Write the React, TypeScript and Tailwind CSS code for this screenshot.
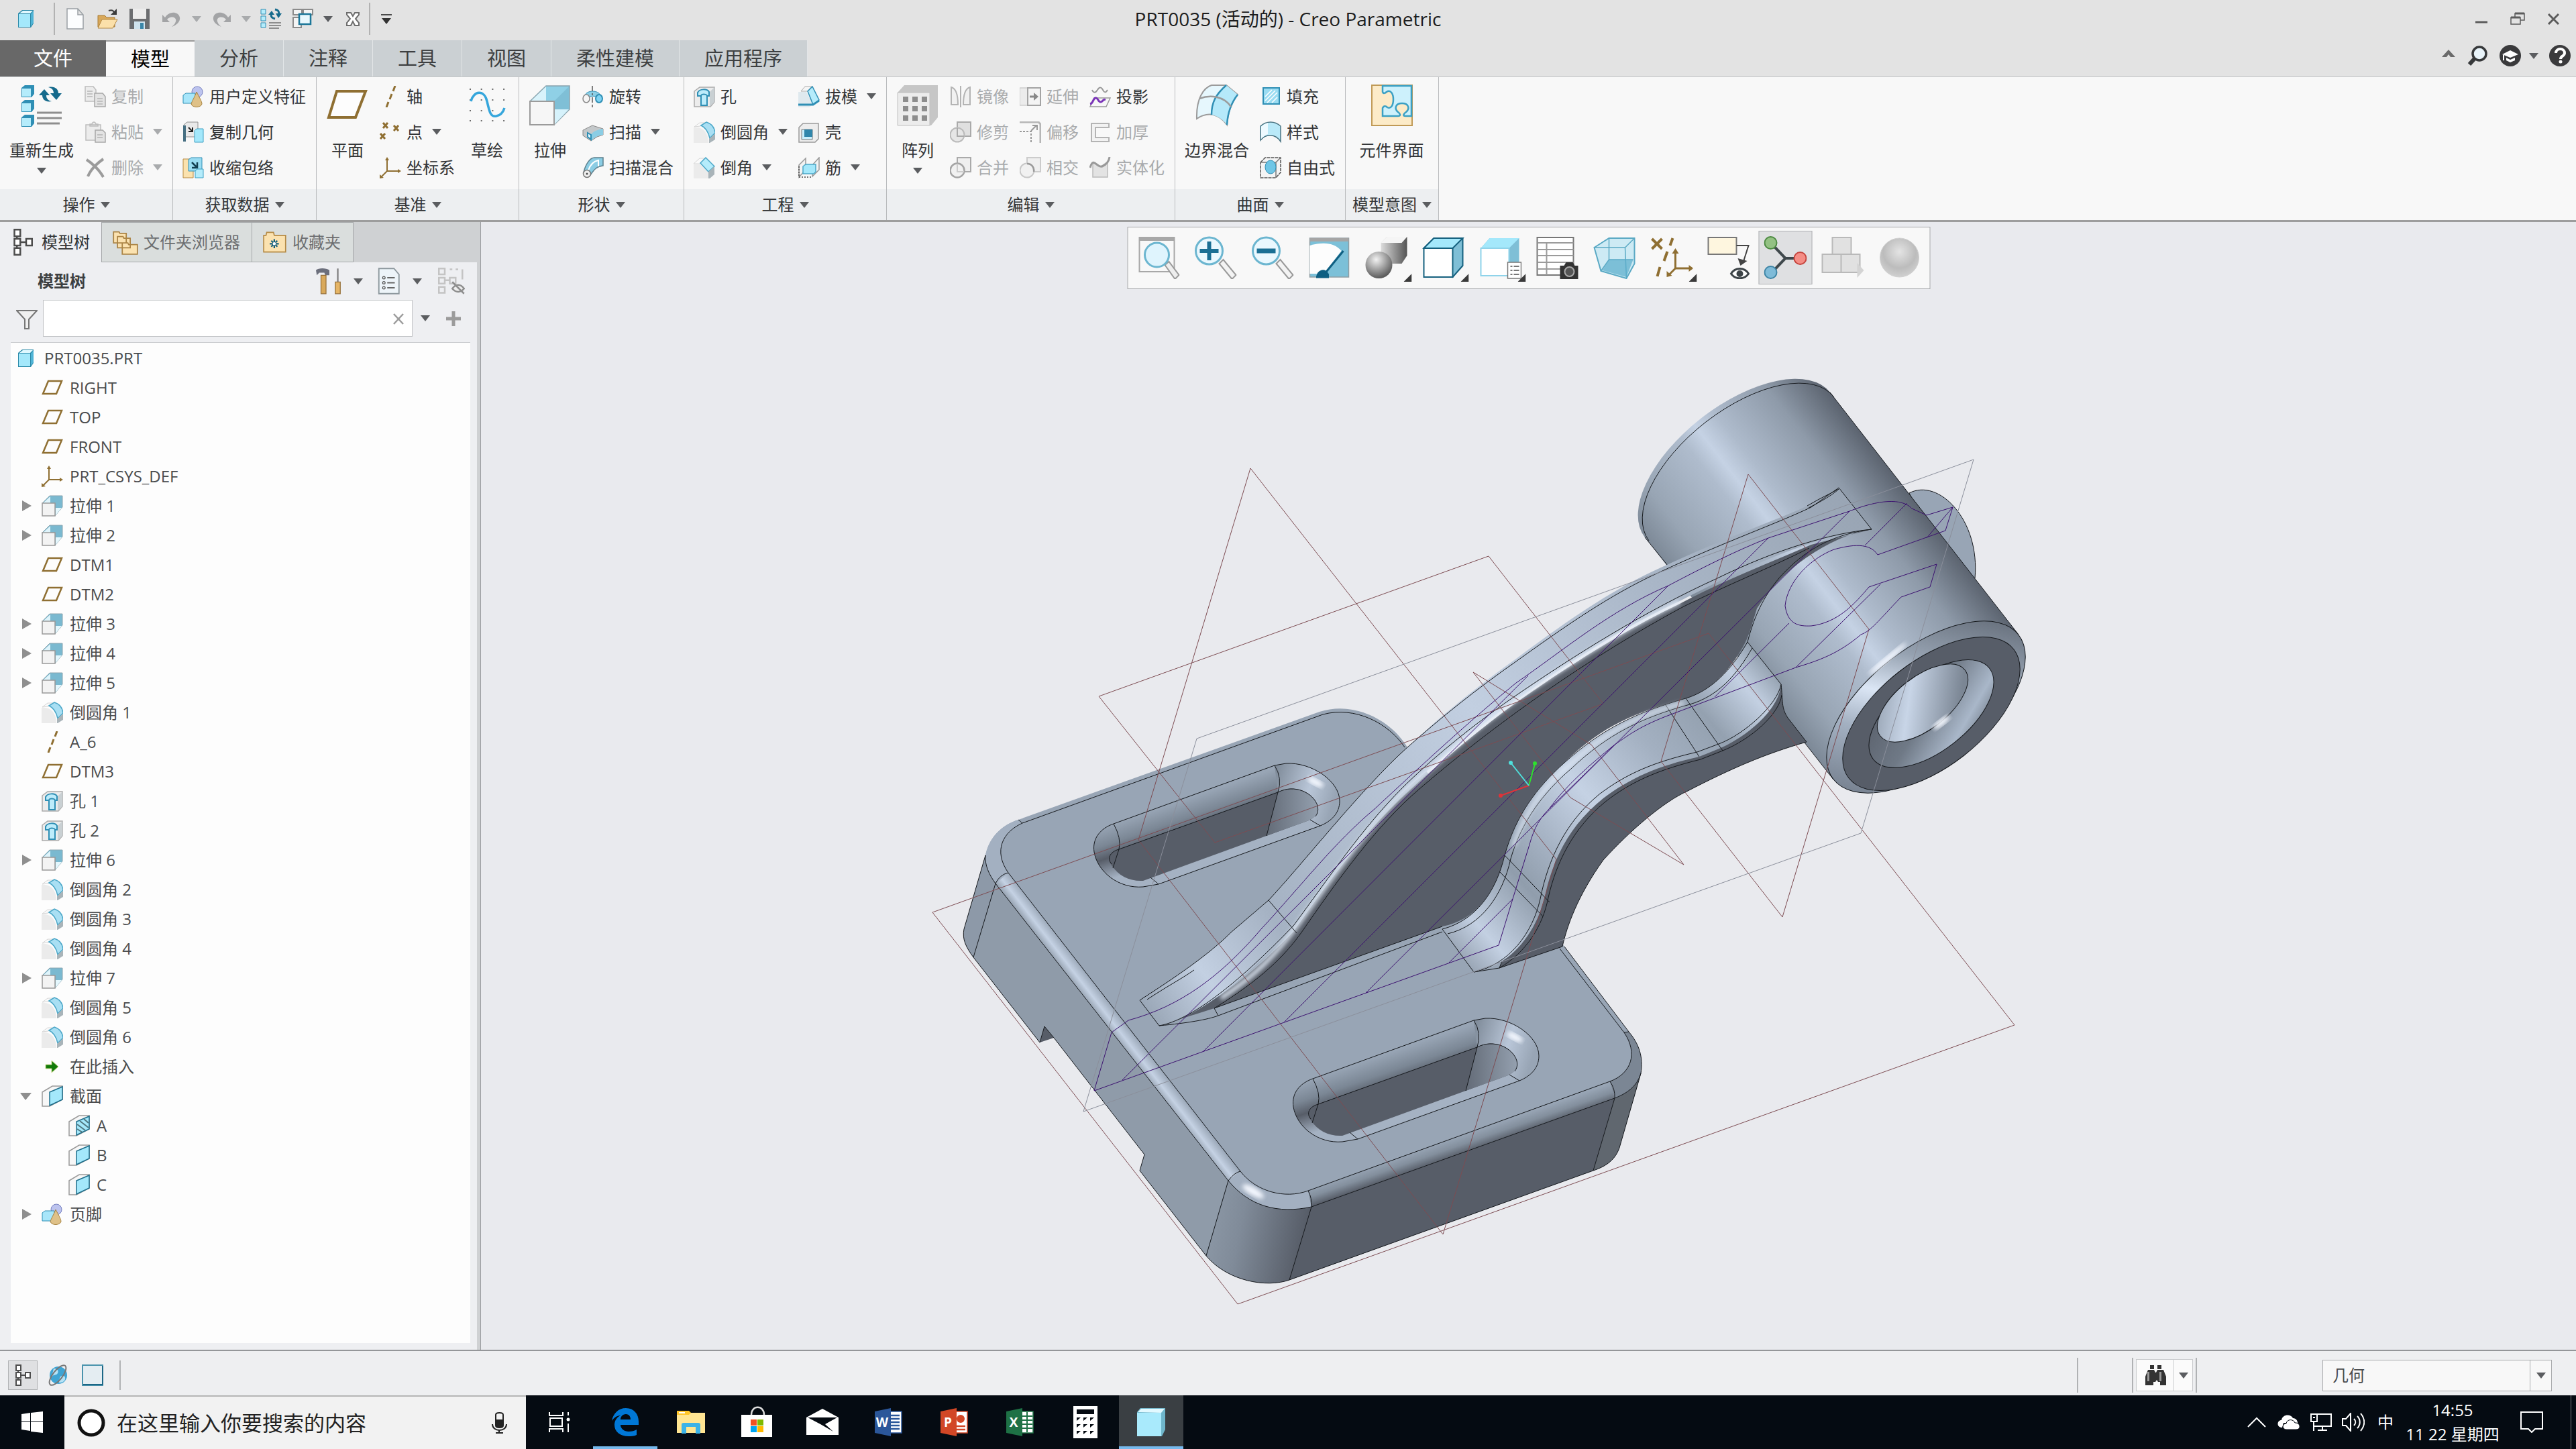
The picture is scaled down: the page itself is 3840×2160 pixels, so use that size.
import type { ReactNode } from "react";

const GRAY = "#8f8f8f";
const BLUE = "#2f8fb5";
const GOLD = "#8f6f32";

// ---------- 32px icons ----------

const ICONS: Record<string, ReactNode> = {
  cube: (
    <>
      <path d="M3 8l6-5h17v20l-4 6H3z" fill="#2b89a8" />
      <path d="M4 9h17v19H4z" fill="#a4e8fb" />
      <path d="M5 8l5-4h15l-4 4z" fill="#dff8ff" />
      <path d="M22 9l4-5v18l-4 5z" fill="#4fb4d6" />
    </>
  ),
  fileNew: <path d="M4 1h16l8 9v21H4zM20 1v9h8" fill="#fcfdfe" stroke="#9aa0a5" strokeWidth="1.5" />,
  open: (
    <>
      <path d="M2 11h10l3 3h12v14H2z" fill="#d8a85a" stroke="#a77a34" />
      <path d="M8 17h23l-7 13H2z" fill="#fbe0aa" stroke="#b58a45" />
      <path d="M18 4c5-2 7 0 8 2" stroke="#3b3b3b" strokeWidth="2" />
      <path d="M30 1v9h-9z" fill="#3b3b3b" />
    </>
  ),
  save: (
    <>
      <path d="M1 1h30v30H1z" fill="#6b6d70" />
      <path d="M6 1h20v15H6z" fill="#ececec" />
      <path d="M8 20h16v11H8z" fill="#cfe3ee" />
      <path d="M17 22h5v9h-5z" fill="#3a86a8" />
    </>
  ),
  undo: <path d="M2 10v11h11l-4-4c5-6 15-4 13 3-1 4-4 6-6 8 8-3 13-8 12-14C26 5 12 4 6 14z" fill="#a3a4a6" />,
  redo: <path d="M30 10v11H19l4-4c-5-6-15-4-13 3 1 4 4 6 6 8-8-3-13-8-12-14C6 5 20 4 26 14z" fill="#a3a4a6" />,
  regen: (
    <>
      <path d="M1 2h7v7H1zM1 12h7v7H1zM1 22h7v7H1z" fill="#b5ecfb" stroke={BLUE} />
      <path d="M13 22h18M13 26h18M13 30h15" stroke="#8e8e8e" strokeWidth="2" />
      <path d="M12 10h9l-4-6zM23 8h9l-5 7z" fill="#156a8c" />
      <path d="M16 9c0 5 2 6 6 7M28 9c0-5-2-6-6-7" stroke="#156a8c" strokeWidth="3" />
    </>
  ),
  windows: (
    <>
      <path d="M1 2h13v8H1zM16 2h14v8H16zM1 14h12v15H1z" fill="#f4f4f4" stroke="#8b8b8b" strokeWidth="2" />
      <path d="M10 9h17v15H10z" fill="#e9f8fd" stroke="#1d7799" strokeWidth="2.5" />
    </>
  ),
  closeWin: (
    <path d="M7 7h6l3 5 3-5h6v3l-5 6 5 6v4h-6l-3-6-3 6H7v-4l5-6-5-6z" fill="#fff" stroke="#6e6e6e" strokeWidth="2" />
  ),
  copy: (
    <>
      <path d="M1 1h12l4 5v17H1z" fill="#ececec" stroke="#bdbdbd" strokeWidth="1.5" />
      <path d="M15 11h12l4 5v15H15z" fill="#e3e3e3" stroke="#a8a8a8" strokeWidth="1.5" />
      <path d="M4 8h8M4 12h8M4 16h8M19 19h8M19 23h8M19 27h8" stroke="#b5b5b5" strokeWidth="1.5" />
    </>
  ),
  paste: (
    <>
      <path d="M2 5h22v23H2zM8 7V4h3c1-4 5-4 6 0h3v3z" fill="#ececec" stroke="#bdbdbd" strokeWidth="1.5" />
      <path d="M16 13h11l4 4v14H16z" fill="#e3e3e3" stroke="#a8a8a8" strokeWidth="1.5" />
      <path d="M19 20h8M19 24h8" stroke="#b5b5b5" strokeWidth="1.5" />
    </>
  ),
  remove: <path d="M3 4c8 5 19 15 25 26M28 3C18 10 9 19 5 29" stroke="#9b9b9b" strokeWidth="4" fill="none" />,
  udf: (
    <>
      <circle cx="22" cy="9" r="8" fill="#bcc3ee" stroke="#7680c0" />
      <path d="M1 14l4-3h14v12l-3 3H1z" fill="#a8e6fa" stroke={BLUE} />
      <path d="M21 9c4 8 8 14 8 18-2 6-14 6-16 0 1-4 5-10 8-18z" fill="#dfc188" stroke="#a5803c" />
    </>
  ),
  copyGeom: (
    <>
      <path d="M2 5l5-4h16v22H2z" fill="#e9e9e9" stroke="#8e8e8e" />
      <path d="M1 6h4v24H1z" fill="#466f82" />
      <path d="M9 9l6 6m0-6v6H9" stroke="#222" strokeWidth="2" fill="none" />
      <path d="M18 14l3-3h10v20H18z" fill="#a4e8fb" stroke="#3aa0c4" />
    </>
  ),
  shrink: (
    <>
      <path d="M1 3h15v28H1z" fill="#fbe2ae" stroke="#b58a45" />
      <path d="M9 4l4-3h16v20H9z" fill="#9adcf2" stroke={BLUE} />
      <path d="M14 8l8 8m0-8v8h-8" stroke="#123f52" strokeWidth="2.5" fill="none" />
      <path d="M19 21l3-3h9v13H19z" fill="#b5ecfb" stroke="#3aa0c4" />
    </>
  ),
  axis: <path d="M23 0l-3 8M18 12l-3 8M13 24l-3 8" stroke={GOLD} strokeWidth="3" />,
  points: (
    <path d="M5 2l7 8m0-8L5 10M21 6l7 8m0-8l-7 8M1 18l7 8m0-8l-7 8" stroke={GOLD} strokeWidth="3" />
  ),
  csys: (
    <>
      <path d="M11 3v18h18M11 21L2 30" stroke={GOLD} strokeWidth="2" fill="none" />
      <path d="M8 5l3-5 3 5zM27 18l5 3-5 3zM0 32v-6l6 5z" fill={GOLD} />
    </>
  ),
  revolve: (
    <>
      <path d="M4 14C7 6 24 6 27 14l-5 5c-2-5-10-5-13 0z" fill="#8ccfe6" stroke={BLUE} />
      <ellipse cx="6" cy="19" rx="5" ry="6" fill="#f5f5f5" stroke="#888" strokeWidth="1.5" />
      <ellipse cx="25" cy="19" rx="5" ry="6" fill="#7fd3f2" stroke={BLUE} strokeWidth="2" />
      <path d="M15 0v8m0 3v3m0 3v8m0 3v4" stroke="#555" strokeWidth="1.5" />
    </>
  ),
  sweep: (
    <>
      <path d="M1 13L15 6l16 5v9l-9 3-9 6-12-8z" fill="#c4c8ca" stroke="#888" />
      <path d="M13 19c6-6 12-7 18-8v9c-8 1-12 3-18 9z" fill="#8bcde4" />
      <path d="M8 17l5 3v7l-5-4z" fill="#e6f7fd" stroke={BLUE} strokeWidth="2" />
    </>
  ),
  blend: (
    <>
      <path d="M2 23C5 10 12 1 18 1h13v12C22 14 18 18 12 27z" fill="#8bcde4" stroke="#5c7f8c" strokeWidth="1.5" />
      <path d="M9 20C12 11 18 6 24 5v9" stroke="#fff" strokeWidth="2" fill="none" />
      <circle cx="7" cy="25" r="5.5" fill="#f0f0f0" stroke="#777" strokeWidth="1.5" />
      <circle cx="7" cy="25" r="1.5" fill="#444" />
    </>
  ),
  hole: (
    <>
      <path d="M1 8l8-6h22v22l-6 7H1z" fill="#ececec" stroke="#aaa" strokeWidth="1.5" />
      <path d="M24 9l7-7v22l-7 7z" fill="#c9d0d3" />
      <path d="M6 10c3-6 14-6 17-1v6h-3v14h-9V15H6z" fill="#bdecfb" stroke={BLUE} strokeWidth="2" />
      <path d="M11 14c2-2 6-2 9 0" stroke={BLUE} strokeWidth="2" fill="none" />
    </>
  ),
  round: (
    <>
      <path d="M0 9h4C14 9 22 17 22 32H0z" fill="#ebebeb" />
      <path d="M1 8l8-6h8l-7 5z" fill="#fafafa" stroke="#ccc" strokeWidth=".8" />
      <path d="M11 6l8-5c7 2 12 8 13 16l-8 8C22 16 18 9 11 6z" fill="#a9dff3" stroke="#4ba7c8" strokeWidth="1.5" />
      <path d="M23 26l9-8v9l-8 5h-1z" fill="#a9b4b9" />
    </>
  ),
  chamfer: (
    <>
      <path d="M0 11h10l12 12v9H0z" fill="#ebebeb" />
      <path d="M0 10l9-8h7l-6 8z" fill="#fafafa" stroke="#ccc" strokeWidth=".8" />
      <path d="M10 9l8-8 13 13-9 8z" fill="#b5ecfb" stroke="#4ba7c8" strokeWidth="1.5" />
      <path d="M22 22l9-8v12l-7 6h-2z" fill="#a9b4b9" />
    </>
  ),
  draft: (
    <>
      <path d="M0 9h12l10 19-6 4H0z" fill="#dfe9ee" />
      <path d="M4 8l6-7h10l-6 7z" fill="#f5f5f5" stroke="#aaa" />
      <path d="M14 8l7-7 10 20-9 7z" fill="#b5ecfb" stroke={BLUE} strokeWidth="1.5" />
      <path d="M0 28h22l9-6" stroke={BLUE} strokeWidth="3" fill="none" />
    </>
  ),
  shell: (
    <>
      <path d="M1 9l6-6h23v23l-5 5H1z" fill="#ededed" stroke="#9a9a9a" strokeWidth="1.5" />
      <path d="M5 12h16v15H5z" fill="#c9eefb" stroke="#777" />
      <path d="M9 12h12v11H9z" fill="#2f86ab" />
    </>
  ),
  rib: (
    <>
      <path d="M1 12L11 2v17L1 30zM31 1L21 12v17l10-10z" fill="#f3f3f3" stroke="#999" strokeWidth="1.5" />
      <path d="M7 14l4-3h15v11l-3 3H7z" fill="#a4e8fb" stroke="#4ba7c8" strokeWidth="1.5" />
      <path d="M1 14v16h20" stroke="#444" strokeWidth="1.5" strokeDasharray="2 2" fill="none" />
    </>
  ),
  mirror: (
    <>
      <path d="M2 2c8 2 10 12 10 26H2zM30 2c-8 2-10 12-10 26h10z" fill="#f1f1f1" stroke="#b4b4b4" strokeWidth="2" />
      <path d="M16 0v32" stroke="#b4b4b4" strokeWidth="2" />
    </>
  ),
  trim: (
    <>
      <path d="M11 1h20v21H11z" fill="#e0e0e0" stroke="#aaa" strokeWidth="2" />
      <circle cx="11" cy="20" r="10.500" fill="#e6e6e6" stroke="#bbb" strokeWidth="2" />
      <path d="M11 10v12h10" stroke="#aaa" strokeWidth="2" />
    </>
  ),
  merge: (
    <>
      <path d="M11 1h20v21H11z" fill="#efefef" stroke="#aaa" strokeWidth="2" />
      <circle cx="11" cy="20" r="10.500" fill="#f1f1f1" stroke="#a4a4a4" strokeWidth="2.5" />
      <path d="M11 10v12h10" stroke="#ccc" strokeWidth="2" />
    </>
  ),
  extend: (
    <>
      <path d="M0 3h31v26H0z" fill="#ececec" stroke="#bbb" />
      <path d="M12 3h19v26H12z" fill="#f4f4f4" stroke="#a4a4a4" strokeWidth="2" />
      <path d="M15 16h8" stroke="#888" strokeWidth="3" />
      <path d="M21 10l7 6-7 6z" fill="#888" />
    </>
  ),
  offset: (
    <>
      <path d="M0 1h28l3 3v28" fill="none" stroke="#b6b6b6" strokeWidth="3" />
      <path d="M0 15h17v17" fill="none" stroke="#999" strokeWidth="2" strokeDasharray="3 2" />
      <path d="M17 14l8-8m-6 0h7v7" fill="none" stroke="#999" strokeWidth="2" />
    </>
  ),
  intersect: (
    <>
      <path d="M11 1h20v21H11z" fill="#efefef" stroke="#ccc" strokeWidth="2" />
      <circle cx="11" cy="20" r="10.500" fill="#f1f1f1" stroke="#c8c8c8" strokeWidth="2" />
      <path d="M11 10c7 0 11 6 10 12" stroke="#999" strokeWidth="2.500" fill="none" />
    </>
  ),
  project: (
    <>
      <path d="M7 18h24l-6 13H1z" fill="#f7f7f7" stroke="#999" strokeWidth="1.5" />
      <path d="M4 6c2 5 5 5 8 0s6-4 8 0 4 5 7 0" fill="none" stroke="#999" strokeWidth="2" />
      <path d="M1 27c5-1 4-8 8-9s4 7 8 6 3-5 7-3" fill="none" stroke="#7b35b8" strokeWidth="3" />
    </>
  ),
  thicken: <path d="M3 3h26v6H9v15h20v6H3z" fill="#f2f2f2" stroke="#b4b4b4" strokeWidth="2" />,
  solidify: (
    <>
      <path d="M5 10c5-2 8 6 14 3l8-6v23H5z" fill="#e3e3e3" stroke="#bbb" strokeWidth="1.500" />
      <path d="M1 16C6-2 11 17 19 14c7-3 10-7 11-14" fill="none" stroke="#999" strokeWidth="3" />
    </>
  ),
  fill: (
    <>
      <path d="M5 3h24v24H5z" fill="#9adcf2" stroke={BLUE} strokeWidth="2" />
      <path d="M8 16L18 6M8 22L23 7M11 25L26 10M18 25l8-8" stroke="#fff" strokeWidth="1.5" />
    </>
  ),
  style: (
    <>
      <path d="M1 7C10-1 22-1 31 7v23C23 18 9 18 1 28z" fill="#b9e9f8" stroke="#4b7482" strokeWidth="1.5" />
      <path d="M2 8c4-4 7-5 10-6v17c-4 1-7 4-10 7z" fill="#eefaff" />
    </>
  ),
  freestyle: (
    <>
      <path d="M1 8l7-7h23v22l-7 8H1z" fill="#f4f4f4" stroke="#555" strokeWidth="1.5" strokeDasharray="5 1" />
      <path d="M1 8h23v23M24 8l7-7" stroke="#777" strokeWidth="1.500" />
      <ellipse cx="16" cy="15" rx="8" ry="10" fill="#6fc6e6" stroke={BLUE} />
    </>
  ),
  plane: <path d="M10 6h20l-8 19H2z" fill="#fdfdfd" stroke={GOLD} strokeWidth="2.500" />,
  extrude: (
    <>
      <path d="M1 12L12 1h19v17L20 31V12z" fill="#7ab9d0" stroke="#8aa4ae" />
      <path d="M2 12L13 2v10z" fill="#dff4fb" />
      <path d="M21 30l9-11h-9z" fill="#e4f7fd" />
      <path d="M1 12h19v19H1z" fill="#f3f3f3" stroke="#999" strokeWidth="1.500" />
    </>
  ),
  insert: <path d="M6 13h9V7l10 9-10 9v-6H6z" fill="#127a08" stroke="#c9d98a" />,
  section: (
    <>
      <path d="M1 10L16 1h15v20L12 31H1z" fill="#f7f7f7" stroke="#999" strokeWidth="1.500" />
      <path d="M12 10l19-8v19l-19 9z" fill="#a4e8fb" stroke="#1f6f8c" strokeWidth="1.500" />
    </>
  ),
  sectionHatch: (
    <>
      <path d="M1 10L16 1h15v20L12 31H1z" fill="#f7f7f7" stroke="#999" strokeWidth="1.500" />
      <path d="M12 10l19-8v19l-19 9z" fill="#a4e8fb" stroke="#1f6f8c" strokeWidth="1.500" />
      <path d="M13 14l12 9M13 21l8 5M17 9l13 10M23 6l7 6" stroke="#50767f" strokeWidth="2" />
    </>
  ),
  treeNodes: (
    <path d="M6 1h7v8H6zM6 12h7v8H6zM6 23h7v8H6zM20 12h7v8h-7zM9 9v3m0 8v3M13 16h7" fill="#fff" stroke="#4d4d4d" strokeWidth="2" />
  ),
  folders: (
    <path d="M1 3h7l1 2h8v12H1zM6 9h7l1 2h8v12H6zM12 17h7l1 2h11v12H12z" fill="#fbe2b0" stroke="#ab8445" strokeWidth="1.500" />
  ),
  favorites: (
    <>
      <path d="M1 7h3l1-4h9l1 4h15v22H1z" fill="#fbe2b0" stroke="#b58a45" strokeWidth="1.500" />
      <path d="M15 12v12M9 18h12M11 14l8 8M19 14l-8 8" stroke="#14607e" strokeWidth="2" />
      <circle cx="15" cy="18" r="2" fill="#fff" />
    </>
  ),
  hammer: (
    <>
      <path d="M0 3c3-3 12-3 16 0v6h-5l-1-3H4l-3 3z" fill="#6c6f7c" />
      <path d="M6 9h6v22H6z" fill="#d9a95b" stroke="#96703a" />
      <path d="M25 1l2 0v17h-2z" fill="#888" />
      <path d="M23 17h6v14h-6z" fill="#e6b566" stroke="#96703a" />
    </>
  ),
  listDoc: (
    <>
      <path d="M3 1h18l6 7v23H3z" fill="#edf4f9" stroke="#8d989e" strokeWidth="1.500" />
      <circle cx="9" cy="12" r="1.500" fill="none" stroke="#555" />
      <circle cx="9" cy="18" r="1.500" fill="none" stroke="#555" />
      <circle cx="9" cy="24" r="1.500" fill="none" stroke="#555" />
      <path d="M13 12h9M13 18h9M13 24h9" stroke="#666" strokeWidth="1.500" />
    </>
  ),
  treeHide: (
    <>
      <path d="M1 1h7v7H1zM1 12h7v7H1zM1 23h7v7H1zM14 12h7v7h-7zM8 15h6M14 2h3m4 0h3m5 0v12" fill="none" stroke="#c4c4c4" strokeWidth="2" />
      <path d="M17 25c4-6 10-6 14 0-4 5-10 5-14 0zM17 17l14 14" fill="#eee" stroke="#8f8f8f" strokeWidth="2" />
    </>
  ),
  funnel: (
    <path d="M1 4h30L19 17v14h-6V17z" fill="#f0f0f0" stroke="#777" strokeWidth="2" />
  ),
  globe: (
    <>
      <circle cx="17" cy="16" r="13" fill="#3fa4d3" />
      <path d="M10 6c5 0 8 3 6 7s-7 1-9 6M20 18c5-3 8 0 7 4s-5 5-8 5 0-6 1-9z" fill="#b6e2f5" />
      <ellipse cx="16" cy="16" rx="18" ry="7" transform="rotate(-52 16 16)" fill="none" stroke="#777" strokeWidth="2" />
    </>
  ),
  browserPane: (
    <>
      <path d="M1 1h30v30H1z" fill="#e4edf2" stroke="#4a93ad" strokeWidth="2" />
      <path d="M2 30h29V2" fill="none" stroke="#1c6786" strokeWidth="2" />
    </>
  ),
  binoculars: (
    <>
      <path d="M8 1h6v6H8zM19 1h6v6h-6zM5 8h9l2 4h1l2-4h9l4 10v13h-9v-5h-3l-2-3-2 3h-3v5H1V18z" fill="#333" />
      <path d="M4 11h3v14H4zM22 11h3v14h-3z" fill="#999" />
    </>
  ),
};

function Icon({ name, className = "size-8" }: { name: string; className?: string }) {
  return (
    <svg viewBox="0 0 32 32" className={`${className} shrink-0`} fill="none" aria-hidden="true">
      {ICONS[name]}
    </svg>
  );
}

// ---------- 64px icons ----------

const BIG: Record<string, ReactNode> = {
  regen: (
    <>
      {[2, 24, 46].map((y) => (
        <g key={y}>
          <path d={`M2 ${y + 4}l5-4h14v13l-4 5H2z`} fill="#2f8fb5" />
          <path d={`M3 ${y + 5}h13v12H3z`} fill="#b5ecfb" />
        </g>
      ))}
      <path d="M25 43h37M25 51h37M25 59h34" stroke="#8e8e8e" strokeWidth="3" />
      <path d="M28 17l8-9 8 9h-5c0 5 3 8 8 9-9 2-14-3-14-9zM62 14l-8 10-9-10h5c0-5-3-8-8-9 10-2 15 3 15 9z" fill="#156a8c" />
    </>
  ),
  plane: <path d="M16 11h43L44 50H4z" fill="#fdfdfd" stroke={GOLD} strokeWidth="4" />,
  sketch: (
    <>
      {[8, 24, 40, 55].map((y) => (
        <path key={y} d={`M6 ${y}h54`} stroke="#6b6b6b" strokeWidth="2" strokeDasharray="2 14.700" />
      ))}
      <path d="M8 26c4-16 20-18 24 0s6 24 14 22c6-1 10-6 12-12" stroke="#35a6dc" strokeWidth="3.500" fill="none" />
    </>
  ),
  extrude: (
    <>
      <path d="M2 26L26 3h35v35L38 61z" fill="#7fbfd6" stroke="#8aa4ae" strokeWidth="1.500" />
      <path d="M3 26L26 4v22z" fill="#d9f3fb" />
      <path d="M26 4h34L38 26H26z" fill="#8fd0e6" />
      <path d="M38 38h22L38 61z" fill="#d6f2fb" />
      <path d="M2 26h36v35H2z" fill="#f6f6f6" stroke="#9b9b9b" strokeWidth="2" />
    </>
  ),
  pattern: (
    <>
      <path d="M2 13L12 2h50v48L52 62H2z" fill="#c6c6c6" />
      <path d="M2 13h48v49H2z" fill="#ececec" stroke="#c0c0c0" />
      {[19, 33, 47].map((y) => (
        <path key={y} d={`M10 ${y}h8v8h-8zM24 ${y}h8v8h-8zM38 ${y}h8v8h-8z`} fill="#8d8d8d" />
      ))}
    </>
  ),
  boundary: (
    <>
      <path d="M2 52C1 22 12 6 24 2h22l17 14C52 30 48 44 47 61 36 46 20 40 2 52z" fill="#e6f7fd" stroke="#9b9b9b" strokeWidth="2" />
      <path d="M46 2l17 14C52 30 48 44 47 61 40 52 33 48 24 46c0-20 8-34 22-44z" fill="#b5e9fa" />
      <path d="M46 2C30 16 24 28 24 46M63 16C52 30 48 44 47 61" stroke="#2f8fb5" strokeWidth="2.500" fill="none" />
      <path d="M6 22c16-6 36-4 47 12" stroke="#9b9b9b" strokeWidth="2.500" fill="none" />
    </>
  ),
  puzzle: (
    <>
      <path d="M2 2h60v60H2z" fill="#fcebc8" stroke="#c09a56" strokeWidth="2" />
      <path
        d="M18 3h43v45h-9c-5 0-2-4 1-6 6-5 4-13-6-13s-12 8-6 13c3 2 5 6 0 6H18V36c2-4 5-3 7-1 6 3 9-4 9-12s-4-15-10-11c-2 2-5 3-6 0z"
        fill="#cdf1fc"
        stroke="#3aa0c4"
        strokeWidth="2.500"
      />
    </>
  ),
  zoomFit: (
    <>
      <path d="M4 2h52v51H4z" fill="#f8f8f8" stroke="#a8a8a8" strokeWidth="2" />
      <path d="M4 2h52v5H4z" fill="#a8a8a8" />
      <path d="M42 43l6-5 15 20-6 6z" fill="#eee" stroke="#999" strokeWidth="2" />
      <circle cx="30" cy="28" r="18" fill="#dff4fd" stroke="#6cb6d0" strokeWidth="3" />
    </>
  ),
  zoomIn: (
    <>
      <path d="M38 41l6-6 19 23-6 6z" fill="#f3f3f3" stroke="#999" strokeWidth="2" />
      <circle cx="23" cy="22" r="20" fill="#eaf8fe" stroke="#6cb6d0" strokeWidth="3" />
      <path d="M9 22h28M23 8v28" stroke="#1a6f94" strokeWidth="6" />
    </>
  ),
  zoomOut: (
    <>
      <path d="M38 41l6-6 19 23-6 6z" fill="#f3f3f3" stroke="#999" strokeWidth="2" />
      <circle cx="23" cy="22" r="20" fill="#eaf8fe" stroke="#6cb6d0" strokeWidth="3" />
      <path d="M9 22h28" stroke="#1a6f94" strokeWidth="7" />
    </>
  ),
  repaint: (
    <>
      <path d="M3 3h58v58H3z" fill="#7cc0d8" stroke="#8f9da3" strokeWidth="1.500" />
      <path d="M3 3h58v5H3z" fill="#a5a5a5" />
      <path d="M3 14C24 8 40 10 50 22L24 56H3z" fill="#fdfdfd" />
      <path d="M53 22L26 55M14 60c2-8 10-12 16-3v4H14z" stroke="#0f5f82" strokeWidth="3" fill="#0f5f82" />
    </>
  ),
  shading: (
    <>
      <path d="M24 10l9-9h30v28l-8 12H24z" fill="url(#steel)" />
      <path d="M24 10l9-9h30l-8 9z" fill="#f5f5f5" />
      <circle cx="21" cy="43" r="20" fill="url(#ball)" />
    </>
  ),
  cubeShaded: (
    <>
      <path d="M3 18L18 3h43v41L46 61z" fill="#7fbfd6" stroke="#14607e" strokeWidth="2" />
      <path d="M3 18L18 3h43L46 18z" fill="#a4e8fb" stroke="#14607e" strokeWidth="2" />
      <path d="M3 18h43v43H3z" fill="#fff" stroke="#14607e" strokeWidth="2" />
    </>
  ),
  savedViews: (
    <>
      <path d="M3 18L16 3h44v41L45 59z" fill="#7fbfd6" />
      <path d="M3 18L16 3h44L45 18z" fill="#a4e8fb" />
      <path d="M3 18h42v41H3z" fill="#fff" stroke="#8fd3ea" strokeWidth="2" />
      <path d="M43 39h20v24H43z" fill="#fff" stroke="#777" strokeWidth="1.500" />
      <path d="M47 45h3m2 0h8M47 51h3m2 0h8M47 57h3m2 0h8" stroke="#777" strokeWidth="2" />
    </>
  ),
  capture: (
    <>
      <path d="M2 2h54v56H2z" fill="#fff" stroke="#777" strokeWidth="2" />
      <path d="M2 10h54M2 20h54M2 29h54M2 39h54M2 49h54M16 10v48" stroke="#9b9b9b" strokeWidth="2" />
      <path d="M36 44h6l3-5h10l3 5h5v20H36z" fill="#333" />
      <circle cx="50" cy="53" r="7" fill="#555" stroke="#aaa" strokeWidth="2" />
    </>
  ),
  perspective: (
    <>
      <path d="M2 17L24 3h38v38L50 63 12 52z" fill="#cdeaf4" stroke="#5aa9c4" strokeWidth="2" />
      <path d="M24 3v32L12 52M24 35h36M2 17h46l14-14M48 17l2 46" fill="none" stroke="#5aa9c4" strokeWidth="1.500" />
      <path d="M24 35h36L50 61 14 51z" fill="#5aaccb" opacity=".7" />
    </>
  ),
  datums: (
    <>
      <path d="M3 4l15 15M18 4L3 19M34 3l-4 11M26 23l-5 14M15 46l-4 14" stroke={GOLD} strokeWidth="4" />
      <path d="M38 24v24h24M38 48L28 58" stroke={GOLD} strokeWidth="3" fill="none" />
      <path d="M33 26l5-8 5 8zM58 43l7 5-7 5zM25 61v-9l8 7z" fill={GOLD} />
    </>
  ),
  annotations: (
    <>
      <path d="M2 2h42v25H2z" fill="#fef6df" stroke="#777" strokeWidth="2" />
      <path d="M44 14h18l-7 22" stroke="#444" strokeWidth="2" fill="none" />
      <path d="M46 33l14 4-10 7z" fill="#444" />
      <path d="M36 56c6-10 20-10 26 0-6 9-20 9-26 0z" fill="#fff" stroke="#3c4347" strokeWidth="3" />
      <circle cx="49" cy="56" r="5" fill="#3c4347" />
    </>
  ),
  spin: (
    <>
      <path d="M11 11l21 22L11 55M32 33h22" stroke="#3f484c" strokeWidth="4" fill="none" />
      <circle cx="10" cy="10" r="9" fill="#93c183" stroke="#4c8a41" strokeWidth="2" />
      <circle cx="10" cy="54" r="9" fill="#7fbbd8" stroke="#3d84a5" strokeWidth="2" />
      <circle cx="54" cy="33" r="9" fill="#f48d85" stroke="#c5443d" strokeWidth="2" />
    </>
  ),
  explode: (
    <>
      <path d="M17 2h28v25H17zM2 27h28v27H2zM30 27h28v27H30z" fill="#e1e1e1" stroke="#b9b9b9" strokeWidth="2" />
      <path d="M54 40l10 11-10 11z" fill="#d4d4d4" />
    </>
  ),
  sphere: <circle cx="32" cy="32" r="29" fill="url(#paleball)" stroke="#d0d0d0" />,
};

function BigIcon({ name }: { name: string }) {
  return (
    <svg viewBox="0 0 64 64" className="size-16 shrink-0" fill="none" aria-hidden="true">
      <defs>
        <linearGradient id="steel">
          <stop offset="0" stopColor="#dcdcdc" />
          <stop offset="1" stopColor="#555" />
        </linearGradient>
        <radialGradient id="ball" cx=".4" cy=".3" r=".8">
          <stop offset="0" stopColor="#f2f2f2" />
          <stop offset="1" stopColor="#444" />
        </radialGradient>
        <radialGradient id="paleball" cx=".5" cy=".35" r=".7">
          <stop offset="0" stopColor="#e4e4e4" />
          <stop offset=".6" stopColor="#bcbcbc" />
          <stop offset="1" stopColor="#d5d5d5" />
        </radialGradient>
      </defs>
      {BIG[name]}
    </svg>
  );
}

function Caret({ color = "#5b5d60" }: { color?: string }) {
  return (
    <svg viewBox="0 0 14 9" className="w-3.5 h-[9px] shrink-0" aria-hidden="true">
      <path d="M0 0h14L7 9z" fill={color} />
    </svg>
  );
}

// ---------- ribbon ----------

interface Cmd {
  icon: string;
  label: string;
  caret?: boolean;
  off?: boolean;
}

function SmallCmd({ cmd }: { cmd: Cmd }) {
  return (
    <button
      disabled={cmd.off}
      className={`flex items-center gap-2 h-[53px] text-2xl whitespace-nowrap ${cmd.off ? "text-[#a9abad]" : "text-[#333537]"}`}
    >
      <Icon name={cmd.icon} />
      {cmd.label}
      {cmd.caret && (
        <span className="pl-1.5">
          <Caret color={cmd.off ? "#a9abad" : undefined} />
        </span>
      )}
    </button>
  );
}

function CmdColumn({ items }: { items: Cmd[] }) {
  return (
    <div className="flex flex-col items-start">
      {items.map((c) => (
        <SmallCmd key={c.label} cmd={c} />
      ))}
    </div>
  );
}

function BigCmd({ icon, label, caret }: Cmd) {
  return (
    <button className="flex flex-col items-center min-w-16 pt-2 text-2xl text-[#333537] whitespace-nowrap">
      <BigIcon name={icon} />
      <span className="pt-[17px] pb-2 leading-9">{label}</span>
      {caret && <Caret />}
    </button>
  );
}

function Group({ title, children }: { title: string; children: ReactNode }) {
  return (
    <section className="flex flex-col border-r border-[#b9bbbd]">
      <div className="flex items-start justify-center flex-1 gap-4 pt-0.5 pl-[14px] pr-[15px]">{children}</div>
      <button className="flex items-center justify-center gap-2 h-[46px] px-2.5 bg-[#edeff1] text-2xl text-[#333537] whitespace-nowrap">
        {title} <Caret />
      </button>
    </section>
  );
}

function Ribbon() {
  return (
    <div className="flex h-[217px] border-t border-[#c4c6c8] border-b-3 border-b-[#9d9d9d] bg-[#f8f8f8]">
      <Group title="操作">
        <BigCmd icon="regen" label="重新生成" caret />
        <CmdColumn
          items={[
            { icon: "copy", label: "复制", off: true },
            { icon: "paste", label: "粘贴", caret: true, off: true },
            { icon: "remove", label: "删除", caret: true, off: true },
          ]}
        />
      </Group>
      <Group title="获取数据">
        <CmdColumn
          items={[
            { icon: "udf", label: "用户定义特征" },
            { icon: "copyGeom", label: "复制几何" },
            { icon: "shrink", label: "收缩包络" },
          ]}
        />
      </Group>
      <Group title="基准">
        <BigCmd icon="plane" label="平面" />
        <CmdColumn
          items={[
            { icon: "axis", label: "轴" },
            { icon: "points", label: "点", caret: true },
            { icon: "csys", label: "坐标系" },
          ]}
        />
        <BigCmd icon="sketch" label="草绘" />
      </Group>
      <Group title="形状">
        <BigCmd icon="extrude" label="拉伸" />
        <CmdColumn
          items={[
            { icon: "revolve", label: "旋转" },
            { icon: "sweep", label: "扫描", caret: true },
            { icon: "blend", label: "扫描混合" },
          ]}
        />
      </Group>
      <Group title="工程">
        <CmdColumn
          items={[
            { icon: "hole", label: "孔" },
            { icon: "round", label: "倒圆角", caret: true },
            { icon: "chamfer", label: "倒角", caret: true },
          ]}
        />
        <CmdColumn
          items={[
            { icon: "draft", label: "拔模", caret: true },
            { icon: "shell", label: "壳" },
            { icon: "rib", label: "筋", caret: true },
          ]}
        />
      </Group>
      <Group title="编辑">
        <BigCmd icon="pattern" label="阵列" caret />
        <CmdColumn
          items={[
            { icon: "mirror", label: "镜像", off: true },
            { icon: "trim", label: "修剪", off: true },
            { icon: "merge", label: "合并", off: true },
          ]}
        />
        <CmdColumn
          items={[
            { icon: "extend", label: "延伸", off: true },
            { icon: "offset", label: "偏移", off: true },
            { icon: "intersect", label: "相交", off: true },
          ]}
        />
        <CmdColumn
          items={[
            { icon: "project", label: "投影" },
            { icon: "thicken", label: "加厚", off: true },
            { icon: "solidify", label: "实体化", off: true },
          ]}
        />
      </Group>
      <Group title="曲面">
        <BigCmd icon="boundary" label="边界混合" />
        <CmdColumn
          items={[
            { icon: "fill", label: "填充" },
            { icon: "style", label: "样式" },
            { icon: "freestyle", label: "自由式" },
          ]}
        />
      </Group>
      <Group title="模型意图">
        <BigCmd icon="puzzle" label="元件界面" />
      </Group>
    </div>
  );
}

// ---------- title bar and tabs ----------

function QuickBtn({ icon, label }: { icon: string; label: string }) {
  return (
    <button aria-label={label} className="flex items-center justify-center w-12">
      <Icon name={icon} />
    </button>
  );
}

function TitleBar() {
  return (
    <div className="grid grid-cols-[1fr_auto_1fr] items-center h-[60px] pb-1 bg-[#e3e3e3]">
      <div className="flex items-center h-12 pl-4">
        <QuickBtn icon="cube" label="系统菜单" />
        <span className="w-0.5 h-full ml-4 mr-1.5 bg-[#b2b2b2]" />
        <QuickBtn icon="fileNew" label="新建" />
        <QuickBtn icon="open" label="打开" />
        <QuickBtn icon="save" label="保存" />
        <QuickBtn icon="undo" label="撤消" />
        <button aria-label="撤消列表" className="px-1.5">
          <Caret color="#a9abad" />
        </button>
        <QuickBtn icon="redo" label="重做" />
        <button aria-label="重做列表" className="px-1.5">
          <Caret color="#a9abad" />
        </button>
        <QuickBtn icon="regen" label="重新生成" />
        <QuickBtn icon="windows" label="窗口" />
        <button aria-label="窗口列表" className="px-1.5">
          <Caret />
        </button>
        <QuickBtn icon="closeWin" label="关闭窗口" />
        <span className="w-0.5 h-full bg-[#b2b2b2]" />
        <button aria-label="自定义快速访问工具栏" className="flex flex-col items-center gap-1 pl-4">
          <span className="w-4 h-0.5 bg-[#4b4b4b]" />
          <Caret color="#333" />
        </button>
      </div>
      <h1 className="text-[28px] leading-9 text-[#1d1d1d] whitespace-nowrap">PRT0035 (活动的) - Creo Parametric</h1>
      <div className="flex items-center justify-end gap-8 pr-[22px] text-[#5c5c5c]">
        <button aria-label="最小化">
          <svg viewBox="0 0 22 22" className="size-[22px]">
            <path d="M2 16h18" stroke="currentColor" strokeWidth="3" />
          </svg>
        </button>
        <button aria-label="还原">
          <svg viewBox="0 0 22 22" className="size-[22px]" fill="none" stroke="currentColor">
            <path d="M1 9h14v10H1zM7 9V3h14v10h-6" strokeWidth="1.500" />
            <path d="M1 9h14M7 3h14" strokeWidth="3" />
          </svg>
        </button>
        <button aria-label="关闭">
          <svg viewBox="0 0 22 22" className="size-[22px]">
            <path d="M3 4l15 15M18 4L3 19" stroke="currentColor" strokeWidth="3" />
          </svg>
        </button>
      </div>
    </div>
  );
}

const TABS = ["分析", "注释", "工具", "视图", "柔性建模", "应用程序"];

function TabBar() {
  return (
    <div className="flex h-[54px] bg-[#e3e3e3] text-[29px] leading-9 whitespace-nowrap">
      <button className="px-[50px] bg-[#686868] text-white">文件</button>
      <button className="px-[37px] bg-[#f8f8f8] text-black border-t-2 border-[#9a9a9a]">模型</button>
      {TABS.map((t) => (
        <button key={t} className="px-[37px] bg-[#cbd0d3] text-[#3d3f41] border-r border-[#e3e6e8]">
          {t}
        </button>
      ))}
      <div className="flex items-center ml-auto gap-3 pr-2 pb-2">
        <button aria-label="最小化功能区">
          <svg viewBox="0 0 32 32" className="size-8">
            <path d="M6 18L16 7l10 11h-7l-3-4-3 4z" fill="#6a6a6a" />
          </svg>
        </button>
        <button aria-label="命令搜索">
          <svg viewBox="0 0 32 32" className="size-8">
            <path d="M3 29l9-10" stroke="#36383a" strokeWidth="6" />
            <circle cx="18" cy="13" r="10" fill="#e9f4fa" stroke="#36383a" strokeWidth="3.500" />
          </svg>
        </button>
        <button aria-label="学习" className="ml-1">
          <svg viewBox="0 0 32 32" className="size-8">
            <circle cx="16" cy="16" r="16" fill="#3a3a3c" />
            <path d="M4 14l12-6 12 6-12 5z" fill="#fff" />
            <path d="M10 19l6 3 7-3v4l-7 3-6-3zM5 15h2v8H5z" fill="#fff" />
          </svg>
        </button>
        <Caret />
        <button aria-label="帮助" className="ml-1">
          <svg viewBox="0 0 32 32" className="size-8">
            <circle cx="16" cy="16" r="16" fill="#3a3a3c" />
            <path d="M10 12c0-8 13-8 13 0 0 5-6 4-6 9" fill="none" stroke="#fff" strokeWidth="4" />
            <circle cx="17" cy="25" r="2.500" fill="#fff" />
          </svg>
        </button>
      </div>
    </div>
  );
}

// ---------- model tree ----------

interface Node {
  icon: string;
  label: string;
  level?: number;
  state?: "closed" | "open";
}

const extrude = (n: number): Node => ({ icon: "extrude", label: `拉伸 ${n}`, state: "closed" });
const round = (n: number): Node => ({ icon: "round", label: `倒圆角 ${n}` });
const plane = (label: string): Node => ({ icon: "plane", label });

const TREE: Node[] = [
  { icon: "cube", label: "PRT0035.PRT", level: 0 },
  plane("RIGHT"),
  plane("TOP"),
  plane("FRONT"),
  { icon: "csys", label: "PRT_CSYS_DEF" },
  extrude(1),
  extrude(2),
  plane("DTM1"),
  plane("DTM2"),
  extrude(3),
  extrude(4),
  extrude(5),
  round(1),
  { icon: "axis", label: "A_6" },
  plane("DTM3"),
  { icon: "hole", label: "孔 1" },
  { icon: "hole", label: "孔 2" },
  extrude(6),
  round(2),
  round(3),
  round(4),
  extrude(7),
  round(5),
  round(6),
  { icon: "insert", label: "在此插入" },
  { icon: "section", label: "截面", state: "open" },
  { icon: "sectionHatch", label: "A", level: 2 },
  { icon: "section", label: "B", level: 2 },
  { icon: "section", label: "C", level: 2 },
  { icon: "udf", label: "页脚", state: "closed" },
];

const INDENT = ["pl-2", "pl-[14px]", "pl-[54px]"];

function TreeRow({ node }: { node: Node }) {
  const level = node.level ?? 1;
  return (
    <li className={`flex items-center gap-[10px] h-11 text-2xl text-[#4a4c4e] whitespace-nowrap ${INDENT[level]}`}>
      <span className="flex items-center">
        {level > 0 && (
          <span className="flex w-8">
            {node.state && (
              <button aria-label={node.state === "open" ? "折叠" : "展开"}>
                <svg viewBox="0 0 18 18" className="size-[18px]">
                  <path d={node.state === "open" ? "M0 4h17L8 15z" : "M3 1v16l14-8z"} fill={GRAY} />
                </svg>
              </button>
            )}
          </span>
        )}
        <Icon name={node.icon} />
      </span>
      {node.label}
    </li>
  );
}

function Sidebar() {
  return (
    <aside className="flex flex-col w-[717px] shrink-0 border-r border-[#9a9c9f] bg-[#cfd1d3]">
      <div className="flex h-[60px] text-2xl whitespace-nowrap">
        <button className="flex items-center gap-2 w-[151px] pl-[14px] bg-[#eeeff2] text-[#333537]">
          <Icon name="treeNodes" className="size-10" />
          模型树
        </button>
        <button className="flex items-center gap-2 w-56 pl-4 bg-[#dadedd] text-[#6d6f71] border border-r-0 border-[#a5a7a9]">
          <Icon name="folders" className="size-[38px]" />
          文件夹浏览器
        </button>
        <button className="flex items-center gap-2 w-38 pl-4 bg-[#dadedd] text-[#6d6f71] border border-[#a5a7a9]">
          <Icon name="favorites" className="size-9" />
          收藏夹
        </button>
      </div>
      <div className="flex flex-col flex-1 mr-[5px] pb-[10px] bg-[#eeeff2]">
        <div className="flex items-center h-14 pl-14 pr-[18px]">
          <h2 className="text-2xl font-bold text-[#3d3f41]">模型树</h2>
          <button aria-label="设置" className="ml-auto">
            <Icon name="hammer" className="size-10" />
          </button>
          <span className="pl-4 pr-5">
            <Caret />
          </span>
          <button aria-label="显示">
            <Icon name="listDoc" className="size-10" />
          </button>
          <span className="pl-3.5 pr-6">
            <Caret />
          </span>
          <button aria-label="隐藏树列">
            <Icon name="treeHide" className="size-10" />
          </button>
        </div>
        <div className="flex items-center pl-6 pr-6 pb-2">
          <Icon name="funnel" />
          <div className="flex items-center flex-1 h-[55px] ml-2 pr-2 border border-[#c2c4c7] bg-white">
            <input aria-label="搜索模型树" className="flex-1 h-full px-2 text-2xl outline-none" />
            <button aria-label="清除">
              <svg viewBox="0 0 22 22" className="size-[22px]">
                <path d="M3 4l14 15M17 4L3 19" stroke="#9b9b9b" strokeWidth="2.500" />
              </svg>
            </button>
          </div>
          <span className="pl-3 pr-6">
            <Caret />
          </span>
          <button aria-label="添加">
            <svg viewBox="0 0 22 22" className="size-[22px]">
              <path d="M11 0v22M0 11h22" stroke="#9b9b9b" strokeWidth="5" />
            </svg>
          </button>
        </div>
        <ul className="flex-1 ml-4 mr-[10px] pt-px border-t border-[#c9cbce] bg-[#fdfdfd]">
          {TREE.map((n) => (
            <TreeRow key={n.label} node={n} />
          ))}
        </ul>
      </div>
    </aside>
  );
}

// ---------- graphics area ----------

const VIEW_TOOLS: { icon: string; label: string; more?: boolean; on?: boolean }[] = [
  { icon: "zoomFit", label: "重新调整" },
  { icon: "zoomIn", label: "放大" },
  { icon: "zoomOut", label: "缩小" },
  { icon: "repaint", label: "重画" },
  { icon: "shading", label: "渲染选项", more: true },
  { icon: "cubeShaded", label: "显示样式", more: true },
  { icon: "savedViews", label: "已保存方向", more: true },
  { icon: "capture", label: "视图管理器" },
  { icon: "perspective", label: "透视图" },
  { icon: "datums", label: "基准显示", more: true },
  { icon: "annotations", label: "注释显示" },
  { icon: "spin", label: "旋转中心", on: true },
  { icon: "explode", label: "分解" },
  { icon: "sphere", label: "模拟" },
];

function ViewToolbar() {
  return (
    <div className="absolute top-[7px] left-1/2 -translate-x-1/2 flex gap-[5px] p-[5px] pb-1.5 border border-[#a3a5a8] bg-[#f8f8f8]">
      {VIEW_TOOLS.map((t) => (
        <button
          key={t.label}
          aria-label={t.label}
          className={`relative flex items-center justify-center size-20 ${t.on ? "border border-[#aeb0b3] bg-[#dfe0e2]" : ""}`}
        >
          <BigIcon name={t.icon} />
          {t.more && (
            <svg viewBox="0 0 12 12" className="absolute right-0.5 bottom-1 size-3">
              <path d="M12 0v12H0z" fill="#3a3a3a" />
            </svg>
          )}
        </button>
      ))}
    </div>
  );
}

function Slot() {
  return (
    <g>
      <path
        d="M1660 1228C1640 1235 1628 1250 1631 1270C1636 1300 1668 1325 1704 1322L1727 1318L1968 1231C1985 1224 1997 1212 1997 1194C1997 1165 1956 1136 1917 1138L1900 1141Z"
        fill="url(#slotRim)"
      />
      <path
        d="M1900 1141L1917 1138C1956 1136 1997 1165 1997 1194C1997 1212 1985 1224 1968 1231L1951 1223C1962 1218 1966 1210 1964 1201C1958 1184 1940 1174 1920 1176L1905 1181Z"
        fill="url(#slotCap)"
      />
      <path
        d="M1668 1266C1654 1270 1650 1280 1657 1290C1668 1306 1684 1314 1704 1313L1951 1223C1962 1218 1966 1210 1964 1201C1958 1184 1940 1174 1920 1176L1905 1181Z"
        fill="#575d68"
      />
      <path d="M1905 1181L1920 1176C1940 1174 1958 1184 1964 1201C1966 1210 1962 1218 1951 1223L1888 1246Z" fill="url(#slotEnd)" />
      <ellipse cx="1961" cy="1166" rx="13" ry="5" transform="rotate(28 1961 1166)" fill="#f4f8ff" filter="url(#soft)" />
      <path
        d="M1660 1228C1640 1235 1628 1250 1631 1270C1636 1300 1668 1325 1704 1322L1727 1318L1968 1231C1985 1224 1997 1212 1997 1194C1997 1165 1956 1136 1917 1138L1900 1141ZM1668 1266L1905 1181C1930 1168 1958 1182 1964 1201C1966 1210 1963 1214 1961 1217M1668 1266C1654 1270 1650 1280 1657 1288M1660 1228Q1672 1250 1668 1266L1659 1294M1900 1141Q1912 1160 1905 1181L1888 1246M1715 1308L1727 1318M1953 1222L1968 1231"
        fill="none"
        stroke="#15181c"
        strokeWidth="1"
      />
    </g>
  );
}

function Part() {
  const edge = { fill: "none", stroke: "#15181c", strokeWidth: 1 };
  return (
    <svg viewBox="717 331 3123 1681" className="flex-1 min-w-0" role="img" aria-label="PRT0035">
      <defs>
        <linearGradient id="barrel" gradientUnits="userSpaceOnUse" x1="2452" y1="801" x2="2728" y2="585">
          <stop offset="0" stopColor="#7d8997" />
          <stop offset=".14" stopColor="#98a5b4" />
          <stop offset=".38" stopColor="#afbccd" />
          <stop offset=".46" stopColor="#c5d2e4" />
          <stop offset=".56" stopColor="#aebbcc" />
          <stop offset=".8" stopColor="#8e9aa9" />
          <stop offset="1" stopColor="#5b636f" />
        </linearGradient>
        <linearGradient id="bore" x1="0" y1="0" x2="1" y2=".5">
          <stop offset="0" stopColor="#8a96a5" />
          <stop offset=".45" stopColor="#c8d5e7" />
          <stop offset="1" stopColor="#7b8694" />
        </linearGradient>
        <linearGradient id="boreRim" x1="0" y1="0" x2=".8" y2="1">
          <stop offset="0" stopColor="#575d68" />
          <stop offset=".5" stopColor="#6f7986" />
          <stop offset=".85" stopColor="#a9b7c9" />
          <stop offset="1" stopColor="#7c8795" />
        </linearGradient>
        <linearGradient id="cornerFront" x1="0" y1="0" x2="1" y2=".2">
          <stop offset="0" stopColor="#8f9ba9" />
          <stop offset=".4" stopColor="#808b99" />
          <stop offset="1" stopColor="#575d68" />
        </linearGradient>
        <linearGradient id="filletLeft" gradientUnits="userSpaceOnUse" x1="1655" y1="1540" x2="1677" y2="1523">
          <stop offset="0" stopColor="#909caa" />
          <stop offset=".45" stopColor="#c5d2e4" />
          <stop offset="1" stopColor="#98a5b5" />
        </linearGradient>
        <linearGradient id="filletFront" gradientUnits="userSpaceOnUse" x1="2175" y1="1693" x2="2184" y2="1719">
          <stop offset="0" stopColor="#98a5b5" />
          <stop offset=".5" stopColor="#838f9d" />
          <stop offset="1" stopColor="#575d68" />
        </linearGradient>
        <linearGradient id="slotRim" gradientUnits="userSpaceOnUse" x1="1775" y1="1188" x2="1800" y2="1262">
          <stop offset="0" stopColor="#98a5b5" />
          <stop offset=".35" stopColor="#7b8795" />
          <stop offset=".6" stopColor="#575d68" />
          <stop offset="1" stopColor="#a5b2c3" />
        </linearGradient>
        <linearGradient id="slotCap" x1="0" y1="0" x2="1" y2=".3">
          <stop offset="0" stopColor="#7b8795" />
          <stop offset=".6" stopColor="#b9c6d8" />
          <stop offset="1" stopColor="#98a5b5" />
        </linearGradient>
        <linearGradient id="slotEnd" x1="0" y1="0" x2="1" y2="0">
          <stop offset="0" stopColor="#636b77" />
          <stop offset="1" stopColor="#94a0af" />
        </linearGradient>
        <linearGradient id="flangeTop" gradientUnits="userSpaceOnUse" x1="1700" y1="1500" x2="2790" y2="760">
          <stop offset="0" stopColor="#98a5b5" />
          <stop offset=".08" stopColor="#c3d0e2" />
          <stop offset=".18" stopColor="#a5b2c3" />
          <stop offset=".5" stopColor="#c2cfe1" />
          <stop offset=".75" stopColor="#a9b6c7" />
          <stop offset="1" stopColor="#98a4b3" />
        </linearGradient>
        <linearGradient id="flangeLow" gradientUnits="userSpaceOnUse" x1="2160" y1="1430" x2="2650" y2="990">
          <stop offset="0" stopColor="#8d99a8" />
          <stop offset=".1" stopColor="#c3d0e2" />
          <stop offset=".24" stopColor="#909dac" />
          <stop offset=".34" stopColor="#a5b2c3" />
          <stop offset=".48" stopColor="#c5d2e4" />
          <stop offset=".66" stopColor="#a3b0c1" />
          <stop offset=".8" stopColor="#94a1b0" />
          <stop offset=".91" stopColor="#c3d0e2" />
          <stop offset="1" stopColor="#8895a3" />
        </linearGradient>
        <linearGradient id="rimOuter" gradientUnits="userSpaceOnUse" x1="2733" y1="1162" x2="3009" y2="946">
          <stop offset="0" stopColor="#6d7785" />
          <stop offset=".35" stopColor="#a3b0c1" />
          <stop offset=".52" stopColor="#dbe6f5" />
          <stop offset=".7" stopColor="#96a2b1" />
          <stop offset="1" stopColor="#5c6470" />
        </linearGradient>
        <filter id="soft">
          <feGaussianBlur stdDeviation="3" />
        </filter>
      </defs>

      {/* base plate */}
      <path
        d="M1451 1427C1440 1412 1434 1400 1437 1385L1469 1275C1474 1250 1492 1230 1518 1222L1967 1061C2020 1044 2075 1075 2098 1114L2332 1411L2428 1538C2443 1556 2450 1575 2446 1600L2414 1711C2408 1728 2396 1738 2375 1745L1922 1908C1888 1920 1830 1910 1798 1872L1699 1745L1706 1721L1571 1547L1557 1530L1550 1554Z"
        fill="#98a5b5"
      />
      <path d="M1484 1317L1831 1760L1798 1872L1699 1745L1706 1721L1571 1547L1557 1530L1550 1554L1451 1427Z" fill="#8f9ba9" />
      <path d="M1550 1554L1557 1530L1571 1547Z" fill="#575d68" />
      <path d="M1484 1317L1451 1427C1440 1412 1434 1400 1437 1385L1469 1275C1468 1290 1474 1303 1484 1317Z" fill="#8d99a8" />
      <path d="M1831 1760C1862 1798 1905 1810 1955 1799L1922 1908C1888 1920 1830 1910 1798 1872Z" fill="url(#cornerFront)" />
      <path d="M1955 1799L2407 1637L2375 1745L1922 1908Z" fill="#575d68" />
      <path d="M2407 1637C2425 1630 2440 1620 2446 1600L2414 1711C2408 1728 2396 1738 2375 1745Z" fill="#60676f" />
      <path d="M1484 1317L1503 1301L1849 1746L1831 1760Z" fill="url(#filletLeft)" />
      <path d="M1469 1275C1474 1250 1492 1230 1518 1222L1524 1227C1495 1240 1480 1268 1503 1301L1484 1317C1474 1303 1468 1290 1469 1275Z" fill="#a3b0c1" />
      <path d="M1849 1746C1872 1776 1915 1788 1950 1775L1955 1799C1905 1810 1862 1798 1831 1760Z" fill="#a3b0c1" />
      <path d="M1950 1775L2400 1612L2407 1637L1955 1799Z" fill="url(#filletFront)" />
      <path d="M2400 1612C2432 1600 2442 1570 2421 1539L2428 1538C2443 1556 2450 1575 2446 1600C2440 1620 2425 1630 2407 1637Z" fill="#7b8694" />
      <ellipse cx="1868" cy="1776" rx="18" ry="6" transform="rotate(30 1868 1776)" fill="#f4f8ff" filter="url(#soft)" />
      <path
        d="M1524 1227C1495 1240 1480 1268 1503 1301L1849 1746C1872 1776 1915 1788 1950 1775L2400 1612C2432 1600 2442 1570 2421 1539L2325 1414M1524 1227L1972 1065C2020 1052 2070 1078 2094 1114M1484 1317L1831 1760C1862 1798 1905 1810 1955 1799L2407 1637C2425 1630 2440 1620 2446 1600M1469 1275C1468 1290 1474 1303 1484 1317L1451 1427M1831 1760L1798 1872M1955 1799L1922 1908M2407 1637L2375 1745M1484 1317Q1490 1304 1503 1301M1831 1760Q1840 1748 1849 1746M1955 1799Q1956 1786 1950 1775M2407 1637Q2408 1624 2400 1612M1518 1222l6 5M2421 1539l7-1"
        {...edge}
      />
      <path
        d="M1469 1275L1437 1385C1434 1400 1440 1412 1451 1427L1550 1554L1557 1530L1571 1547L1706 1721L1699 1745L1798 1872C1830 1910 1888 1920 1922 1908L2375 1745C2396 1738 2408 1728 2414 1711L2446 1600C2450 1575 2443 1556 2428 1538L2332 1411"
        {...edge}
      />
      <Slot />
      <g transform="translate(297 380)">
        <Slot />
      </g>

      {/* boss behind the barrel, barrel, bore */}
      <path d="M2846 735C2890 712 2952 775 2944 862L2890 820Z" fill="#98a5b5" stroke="#15181c" />
      <path d="M2452 801A175 88 -38 0 1 2728 585L3009 946A175 88 -38 0 1 2733 1162Z" fill="url(#barrel)" />
      <path d="M2458 806A167 84 -38 0 1 2734 592" {...edge} />
      <path d="M2728 585L3009 946M2452 801l34 42M2665 1075l68 87" {...edge} />
      <ellipse cx="2871" cy="1054" rx="175" ry="88" transform="rotate(-38 2871 1054)" fill="url(#rimOuter)" stroke="#15181c" />
      <ellipse cx="2879" cy="1064" rx="156" ry="79" transform="rotate(-38 2879 1064)" fill="#575d68" stroke="#15181c" />
      <ellipse cx="2879" cy="1064" rx="110" ry="55" transform="rotate(-38 2879 1064)" fill="url(#boreRim)" stroke="#15181c" />
      <ellipse cx="2866" cy="1048" rx="80" ry="39" transform="rotate(-38 2866 1048)" fill="url(#bore)" stroke="#15181c" />
      <ellipse cx="2894" cy="1077" rx="15" ry="5" transform="rotate(-38 2894 1077)" fill="#f4f8ff" filter="url(#soft)" />
      <ellipse cx="2814" cy="982" rx="36" ry="4" transform="rotate(-40 2814 982)" fill="#f4f8ff" filter="url(#soft)" />

      {/* underside of the arm */}
      <path
        d="M2235 1443L2329 1411C2336 1380 2352 1335 2390 1282C2430 1238 2480 1195 2516 1179C2580 1146 2630 1124 2693 1106L2665 1070C2655 1055 2658 1045 2655 1020L2450 1100L2290 1300Z"
        fill="#575d68"
        stroke="#15181c"
      />
      {/* web */}
      <path
        d="M1728 1529C1780 1515 1850 1470 1928 1389C1970 1330 2040 1230 2106 1174C2160 1125 2220 1075 2275 1037C2350 985 2430 935 2504 900C2570 865 2640 838 2700 812L2790 789C2745 795 2665 835 2619 907C2612 930 2608 945 2602 957C2580 1000 2550 1030 2513 1041C2440 1062 2390 1080 2332 1137C2290 1175 2260 1215 2243 1275C2230 1330 2200 1372 2150 1381L1810 1503Z"
        fill="#575d68"
      />
      {/* top flange */}
      <path
        d="M1699 1491C1750 1458 1800 1425 1836 1389L1891 1342C1940 1290 2030 1175 2098 1114C2150 1065 2200 1025 2260 982C2330 930 2400 880 2476 846C2570 802 2650 775 2694 754L2741 727L2790 789C2770 790 2750 794 2728 800C2640 828 2570 862 2504 896C2430 930 2350 980 2275 1033C2220 1070 2160 1120 2106 1168C2040 1225 1975 1320 1928 1385C1850 1462 1790 1515 1728 1529Z"
        fill="url(#flangeTop)"
      />
      <path
        d="M1820 1488C1870 1455 1900 1425 1932 1382C1980 1316 2043 1224 2110 1166C2162 1118 2222 1068 2277 1031C2350 982 2430 932 2504 897"
        fill="none"
        stroke="#e3ecf8"
        strokeWidth="6"
        filter="url(#soft)"
      />
      <path
        d="M1699 1491C1750 1458 1800 1425 1836 1389L1891 1342C1940 1290 2030 1175 2098 1114M1710 1490C1740 1470 1760 1460 1780 1446M2098 1114C2150 1068 2200 1028 2260 986C2330 936 2400 886 2476 852C2570 808 2650 780 2700 756L2741 727L2790 789C2730 795 2650 818 2560 862C2450 912 2350 975 2255 1040C2190 1085 2130 1135 2090 1175C2030 1235 1980 1310 1928 1380C1880 1430 1790 1518 1728 1529L1699 1491M1891 1342L1933 1391M1810 1503L1816 1514M1728 1529C1770 1525 1800 1520 1816 1514L2150 1389M1810 1503L2150 1381"
        {...edge}
      />
      <path d="M1810 1503C1880 1460 1915 1425 1940 1390C1990 1318 2050 1232 2116 1176C2210 1095 2350 990 2510 904C2570 874 2640 846 2697 817" {...edge} />
      {/* lower flange */}
      <path
        d="M2150 1385C2200 1372 2230 1330 2243 1275C2260 1215 2290 1175 2332 1137C2390 1085 2440 1062 2513 1041C2550 1030 2580 1000 2605 957L2655 1020C2652 1060 2600 1100 2565 1115L2533 1128C2470 1142 2430 1160 2390 1190C2340 1230 2315 1280 2303 1336C2292 1385 2255 1440 2197 1449Z"
        fill="url(#flangeLow)"
      />
      <path
        d="M2150 1385C2200 1372 2230 1330 2243 1275C2260 1215 2290 1175 2332 1137C2390 1085 2440 1062 2513 1041C2550 1030 2580 1000 2605 957C2612 930 2625 890 2659 854C2700 812 2740 796 2790 789M2158 1392C2208 1380 2240 1335 2252 1280C2268 1225 2300 1182 2342 1146C2396 1095 2446 1070 2519 1050C2560 1038 2588 1008 2612 966M2197 1449C2250 1438 2285 1390 2296 1340C2308 1280 2334 1225 2384 1184C2425 1153 2465 1136 2530 1121L2562 1109C2600 1095 2650 1050 2655 1020M2197 1449L2235 1443C2275 1420 2300 1380 2308 1338C2320 1285 2345 1235 2392 1196C2430 1166 2470 1148 2535 1132L2568 1119C2610 1102 2652 1065 2656 1036M2605 957L2655 1020M2483 1051L2533 1128M2513 1041L2568 1119M2150 1385L2197 1449M2243 1275L2310 1345M2236 1300L2300 1366"
        {...edge}
      />
      <path d="M2256 1262C2272 1214 2302 1172 2340 1140C2392 1092 2442 1066 2510 1048" fill="none" stroke="#e3ecf8" strokeWidth="4" filter="url(#soft)" />
      <path d="M2694 754L2710 745L2741 729C2735 735 2720 745 2696 757" {...edge} />

      {/* datum planes */}
      <g fill="none" stroke="#7d4c52" strokeWidth="1">
        <path d="M1390 1360L1845 1944L3003 1528L2547 944Z" />
        <path d="M1638 1038L2219 829L2390 1049L1811 1256Z" />
        <path d="M1864 698L1697 1252L2151 1840L2320 1281Z" />
        <path d="M2606 707L2786 938L2657 1367L2476 1135Z" />
        <path d="M2196 1002L2372 1110L2510 1289L2341 1189Z" />
      </g>
      <path d="M1784 1101L2942 685L2774 1242L1615 1657Z" fill="none" stroke="#8b8f9b" strokeWidth="1" />

      {/* cross section */}
      <g fill="none" stroke="#3c1170" strokeWidth="1">
        <path d="M1631 1626L1657 1539L1682 1521C1760 1500 1820 1455 1880 1385C1940 1320 1990 1255 2049 1206C2120 1140 2190 1075 2260 1018C2330 970 2400 910 2487 873C2540 845 2590 820 2636 802L2757 762C2800 745 2835 742 2850 758L2872 768L2911 756L2900 791L2799 827C2785 805 2750 815 2734 819C2700 832 2665 865 2661 903C2665 930 2680 934 2700 933C2740 928 2765 900 2786 875L2887 841L2877 875L2834 890C2800 925 2790 940 2774 946C2740 975 2710 985 2677 995L2483 1068C2440 1085 2425 1098 2407 1110C2370 1140 2335 1170 2309 1206C2290 1225 2284 1245 2280 1259L2255 1340L2234 1409Z" />
        <path d="M1673 1610L2278 1007M1794 1567L2487 873M1914 1524L2636 802M2036 1480L2757 762M2160 1435L2255 1340M2309 1206L2407 1110M2556 1039L2667 929M2677 995L2803 871M2780 813L2843 750M2872 802L2911 756" />
      </g>

      {/* spin center */}
      <g strokeWidth="2" fill="none">
        <path d="M2279 1171L2237 1186" stroke="#e03238" />
        <path d="M2279 1171L2288 1139" stroke="#2ee02e" />
        <path d="M2279 1171L2252 1137" stroke="#4fe0dc" />
      </g>
      <circle cx="2237" cy="1186" r="3" fill="#e03238" />
      <circle cx="2288" cy="1138" r="3" fill="#2ee02e" />
      <circle cx="2252" cy="1137" r="3" fill="#4fe0dc" />
    </svg>
  );
}

// ---------- status bar and taskbar ----------

function StatusBar() {
  return (
    <div className="flex items-center h-[68px] pt-1.5 border-t-2 border-[#949699] bg-[#eeeff1]">
      <button aria-label="模型树" className="flex items-center justify-center ml-3 size-11 border border-[#b0b2b4] bg-[#dfe0e2]">
        <Icon name="treeNodes" />
      </button>
      <button aria-label="浏览器" className="ml-[14px]">
        <Icon name="globe" />
      </button>
      <button aria-label="全屏" className="ml-5">
        <Icon name="browserPane" />
      </button>
      <span className="w-0.5 h-11 ml-6 bg-[#b0b2b4]" />
      <span className="w-0.5 h-[52px] ml-auto bg-[#b0b2b4]" />
      <span className="w-0.5 h-[52px] ml-20 mr-1 bg-[#b0b2b4]" />
      <div className="flex h-12 border border-[#c9cbcd] bg-[#fbfbfb]">
        <button aria-label="查找" className="flex items-center justify-center w-[55px]">
          <Icon name="binoculars" />
        </button>
        <button aria-label="查找列表" className="flex items-center justify-center w-7 border-l border-[#c9cbcd]">
          <Caret />
        </button>
      </div>
      <span className="w-0.5 h-[52px] ml-1 bg-[#b0b2b4]" />
      <div className="flex items-center w-[342px] h-[47px] ml-[187px] mr-9 border border-[#a9abad] bg-[#f8f8f8]">
        <select aria-label="选择过滤器" className="flex-1 h-full pl-3.5 appearance-none text-2xl text-[#4a4c4e] outline-none">
          <option>几何</option>
        </select>
        <span className="flex items-center justify-center w-8 h-full border-l border-[#a9abad] pointer-events-none">
          <Caret />
        </span>
      </div>
    </div>
  );
}

function OfficeIcon({ color, letter, children }: { color: string; letter: string; children: ReactNode }) {
  return (
    <svg viewBox="0 0 42 42" className="size-[42px]">
      <path d="M22 5h19v32H22z" fill="#fff" stroke={color} strokeWidth="1.500" />
      {children}
      <path d="M1 5l24-5v42L1 37z" fill={color} />
      <text x="12" y="28" textAnchor="middle" fontSize="19" fontWeight="700" fill="#fff">
        {letter}
      </text>
    </svg>
  );
}

const APPS: { label: string; open?: boolean; active?: boolean; art: ReactNode }[] = [
  {
    label: "任务视图",
    art: (
      <svg viewBox="0 0 32 32" className="size-8" fill="none" stroke="#fff" strokeWidth="2">
        <path d="M1 1v5h20V1M1 31v-5h20v5M2 10h18v12H2zM29 1v5M29 18v13" />
        <circle cx="29" cy="12" r="2.500" fill="#fff" stroke="none" />
      </svg>
    ),
  },
  {
    label: "Edge",
    open: true,
    art: (
      <svg viewBox="0 0 42 42" className="size-[42px]">
        <path
          d="M1 19C3 8 11 0 22 0c12 0 19 9 19 20v5H14c0 6 6 10 12 10 5 0 9-1 12-3v8c-4 2-8 2-12 2C13 42 5 35 5 25c0-6 3-11 9-14-6 0-10 4-13 8zm13-2h15c0-4-2-8-7-8s-8 4-8 8z"
          fill="#0078d7"
        />
      </svg>
    ),
  },
  {
    label: "文件资源管理器",
    art: (
      <svg viewBox="0 0 42 42" className="size-[42px]">
        <path d="M0 7h42v30H0z" fill="#ffe592" />
        <path d="M0 4h18l3 3-3 3H0z" fill="#ffc62b" />
        <path d="M3 6h9v2H3z" fill="#fff" />
        <path d="M7 38V25c0-2 1-3 3-3h22c2 0 3 1 3 3v13h-7V28H14v10z" fill="#3bb3e8" />
      </svg>
    ),
  },
  {
    label: "Microsoft Store",
    art: (
      <svg viewBox="0 0 48 48" className="size-12">
        <path d="M16 13C16-2 35-2 35 13" fill="none" stroke="#ddd" strokeWidth="2.500" />
        <path d="M1 13h46v33H1z" fill="#fff" />
        <path d="M15 20h9v9h-9z" fill="#f25022" />
        <path d="M25 20h9v9h-9z" fill="#7fba00" />
        <path d="M15 30h9v9h-9z" fill="#00a4ef" />
        <path d="M25 30h9v9h-9z" fill="#ffb900" />
      </svg>
    ),
  },
  {
    label: "邮件",
    art: (
      <svg viewBox="0 0 48 40" className="w-12 h-10">
        <path d="M0 13L24 0l24 13v26H0z" fill="#fff" />
        <path d="M2 13h44L28 23l12 11-19-11z" fill="#050b12" />
      </svg>
    ),
  },
  {
    label: "Word",
    art: (
      <OfficeIcon color="#2b579a" letter="W">
        <path d="M25 11h13M25 16h13M25 21h13M25 26h13M25 31h13" stroke="#2b579a" strokeWidth="2.500" />
      </OfficeIcon>
    ),
  },
  {
    label: "PowerPoint",
    art: (
      <OfficeIcon color="#d24726" letter="P">
        <circle cx="31" cy="16" r="6" fill="#d24726" />
        <path d="M25 27h13M25 32h13" stroke="#d24726" strokeWidth="2.500" />
      </OfficeIcon>
    ),
  },
  {
    label: "Excel",
    art: (
      <OfficeIcon color="#1e7145" letter="X">
        <path d="M25 12h15M25 18h15M25 24h15M25 30h15M32 6v30" stroke="#1e7145" strokeWidth="2" />
      </OfficeIcon>
    ),
  },
  {
    label: "计算器",
    art: (
      <svg viewBox="0 0 36 48" className="w-9 h-12">
        <path d="M0 0h36v48H0z" fill="#fff" />
        <path d="M5 5h26v7H5zM5 17h6l-6 5zM15 17h6l-6 5zM25 17h6l-6 5zM5 27h6l-6 5zM15 27h6l-6 5zM25 27h6l-6 5zM5 37h6l-6 5zM15 37h6l-6 5zM25 37h6l-6 5z" fill="#050b12" />
      </svg>
    ),
  },
  {
    label: "Creo Parametric",
    open: true,
    active: true,
    art: (
      <svg viewBox="0 0 44 44" className="size-11">
        <path d="M1 7l5-6h37v32l-5 10H1z" fill="#6fb6cb" />
        <path d="M1 8h36v35H1z" fill="#a9eafc" />
        <path d="M2 7l5-5h35l-5 6z" fill="#e2f9ff" />
      </svg>
    ),
  },
];

function Taskbar() {
  return (
    <footer className="flex h-20 bg-[#050b12] text-white">
      <button aria-label="开始" className="flex items-center justify-center w-24">
        <svg viewBox="0 0 32 32" className="size-8" fill="#fff">
          <path d="M0 4l13-2v13H0zM14 2l18-2v15H14zM0 16h13v13L0 27zM14 16h18v16l-18-2z" />
        </svg>
      </button>
      <label className="flex items-center w-[688px] pl-[18px] pr-6 bg-[#f2f2f2] border-t-2 border-[#b5b5b5]">
        <svg viewBox="0 0 44 44" className="size-11 shrink-0">
          <circle cx="22" cy="22" r="18" fill="#fff" stroke="#111" strokeWidth="5" />
        </svg>
        <input
          aria-label="搜索"
          placeholder="在这里输入你要搜索的内容"
          className="flex-1 min-w-0 ml-4 text-[31px] text-[#222] placeholder:text-[#222] outline-none"
        />
        <svg viewBox="0 0 32 32" className="size-8" fill="none" stroke="#222" strokeWidth="2">
          <path d="M11 4c0-4 11-4 11 0v16c0 4-11 4-11 0zM6 18c0 12 21 12 21 0M16 27v4M11 31h11" />
          <path d="M12 12h9v10h-9z" fill="#222" />
        </svg>
      </label>
      <nav className="flex gap-0.5 pl-0.5">
        {APPS.map((a) => (
          <button
            key={a.label}
            aria-label={a.label}
            className={`flex items-center justify-center w-24 pt-1 border-b-4 ${a.open ? "border-[#76b9ed]" : "border-transparent"} ${
              a.active ? "bg-[#3a3f43]" : ""
            }`}
          >
            {a.art}
          </button>
        ))}
      </nav>
      <div className="flex items-center ml-auto text-2xl">
        <button aria-label="显示隐藏的图标" className="flex justify-center w-12">
          <svg viewBox="0 0 28 16" className="w-7 h-4" fill="none" stroke="#fff" strokeWidth="2">
            <path d="M1 15L14 2l13 13" />
          </svg>
        </button>
        <button aria-label="OneDrive" className="flex justify-center w-12">
          <svg viewBox="0 0 34 24" className="w-[34px] h-6">
            <path d="M7 20C-2 20-1 9 6 9 7 0 20-1 23 6c5 0 7 4 7 7H9z" fill="#fff" />
            <path d="M14 23c-8 0-7-9-1-9 1-7 11-7 13-1 8-1 10 10 2 10z" fill="#fff" stroke="#050b12" />
          </svg>
        </button>
        <button aria-label="网络" className="flex justify-center w-12">
          <svg viewBox="0 0 32 28" className="w-8 h-7" fill="none" stroke="#fff" strokeWidth="2">
            <path d="M10 2h21v18H5M1 2h9v11H1zM5 13v14M18 20v6M11 26h14M4 7h3" />
          </svg>
        </button>
        <button aria-label="音量" className="flex justify-center w-12">
          <svg viewBox="0 0 34 28" className="w-[34px] h-7" fill="none" stroke="#fff" strokeWidth="2">
            <path d="M1 9h5l7-8v26l-7-8H1zM18 9c3 3 3 7 0 10M23 5c5 5 5 13 0 18M28 1c7 8 7 18 0 26" />
          </svg>
        </button>
        <button className="w-12">中</button>
        <button className="w-38 leading-9 text-center whitespace-nowrap">
          14:55
          <br />
          11 22 星期四
        </button>
        <button aria-label="操作中心" className="flex justify-center w-[84px]">
          <svg viewBox="0 0 34 32" className="w-[34px] h-8" fill="none" stroke="#fff" strokeWidth="2">
            <path d="M1 1h32v25H22l-5 5-5-5H1z" />
          </svg>
        </button>
        <button aria-label="显示桌面" className="w-2 h-20 ml-4 border-l border-[#7b7f83]" />
      </div>
    </footer>
  );
}

export default function App() {
  return (
    <div className="flex flex-col min-h-screen bg-[#e9eaee] font-['Open_Sans','Noto_Sans_CJK_SC',sans-serif]">
      <header>
        <TitleBar />
        <TabBar />
        <Ribbon />
      </header>
      <main className="flex flex-1">
        <Sidebar />
        <div className="relative flex flex-1 min-w-0">
          <Part />
          <ViewToolbar />
        </div>
      </main>
      <StatusBar />
      <Taskbar />
    </div>
  );
}
